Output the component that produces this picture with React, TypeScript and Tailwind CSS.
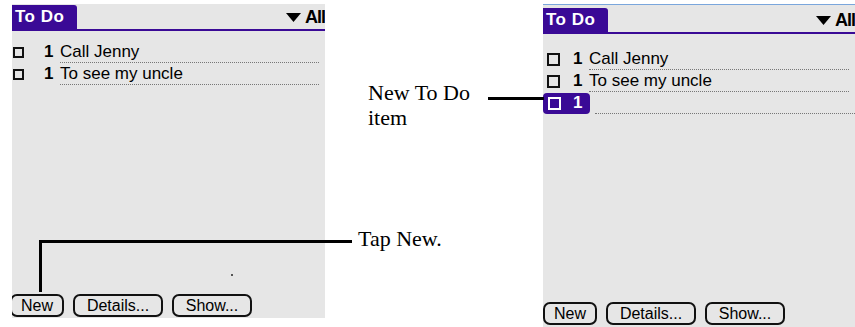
import React from 'react'

const purple = 'bg-[#3a0a96]'

function Header({ offset }: { offset: boolean }) {
  return (
    <div className={offset ? 'pt-[3px]' : 'pt-[1px]'}>
      <div className="flex h-[24px] items-stretch">
        <div className={`${purple} flex w-[65px] items-center rounded-tr-[3px] pl-[3px] text-[17px] font-bold tracking-[0.5px] text-white`}>
          To Do
        </div>
        <div className="flex flex-1 items-center justify-end gap-[4px]">
          <svg width="15" height="9" viewBox="0 0 15 9">
            <polygon points="0,0 15,0 7.5,9" fill="#000" />
          </svg>
          <span className="w-[20px] overflow-hidden whitespace-nowrap text-[18px] font-bold leading-none tracking-[-1px]">All</span>
        </div>
      </div>
      <div className={`${purple} h-[2px]`} />
    </div>
  )
}

function Row({ text, big }: { text: string; big: boolean }) {
  return (
    <div className="flex h-[22px] items-center">
      <div className={`${big ? 'ml-[4px] h-[13px] w-[13px]' : 'ml-[1px] h-[11px] w-[11px]'} border-2 border-[#111]`} />
      <span className={`${big ? 'ml-[13px]' : 'ml-[20px]'} w-[16px] text-[17px] font-bold`}>1</span>
      <div className="mr-[6px] flex h-full flex-1 items-center border-b border-dotted border-[#777] text-[17px]">
        {text}
      </div>
    </div>
  )
}

function Buttons() {
  return (
    <div className="flex h-[23px] gap-[9px] text-[16px]">
      {['New', 'Details...', 'Show...'].map((b, i) => (
        <div
          key={b}
          className={`flex items-center justify-center rounded-[7px] border-2 border-[#111] ${i === 0 ? 'w-[54px]' : i === 1 ? 'w-[90px]' : 'w-[80px]'}`}
        >
          {b}
        </div>
      ))}
    </div>
  )
}

export default function App() {
  return (
    <div className="relative flex h-[327px] w-[855px] overflow-hidden bg-white font-['Liberation_Sans',sans-serif] text-black">
      {/* left screen */}
      <div className="ml-[12px] mt-[4px] flex h-[314px] w-[313px] flex-col overflow-hidden bg-[#e6e6e6]">
        <Header offset={false} />
        <div className="mt-[10px]">
          <Row text="Call Jenny" big={false} />
          <Row text="To see my uncle" big={false} />
        </div>
        <div className="relative flex-1">
          <div className="absolute left-[219px] top-[189px] h-[2px] w-[2px] bg-[#555]" />
        </div>
        <div className="mb-[1px] -ml-[2px]">
          <Buttons />
        </div>
      </div>

      {/* callouts */}
      <div className="flex w-[218px] flex-col font-['Liberation_Serif',serif] text-[22px] leading-[25px]">
        <div className="ml-[43px] mt-[80px] w-[115px]">New To Do item</div>
        <div className="ml-[33px] mt-[96px]">Tap New.</div>
      </div>

      {/* right screen */}
      <div className="mt-[4px] flex h-[323px] w-[312px] flex-col overflow-hidden border-t border-t-[#7aa6dc] bg-[#e6e6e6]">
        <Header offset />
        <div className="mt-[14px]">
          <Row text="Call Jenny" big />
          <Row text="To see my uncle" big />
          <div className="flex h-[22px] items-center">
            <div className={`${purple} flex h-[21px] w-[47px] items-center rounded-[4px]`}>
              <div className="ml-[5px] h-[13px] w-[13px] border-2 border-white" />
              <span className="ml-[12px] text-[17px] font-bold text-white">1</span>
            </div>
            <div className="ml-[5px] h-full flex-1 border-b border-dotted border-[#777]" />
          </div>
        </div>
        <div className="flex-1" />
        <div className="mb-[2px]">
          <Buttons />
        </div>
      </div>

      {/* pointer lines */}
      <div className="absolute left-[39px] top-[240px] h-[3px] w-[313px] bg-black" />
      <div className="absolute left-[39px] top-[240px] h-[52px] w-[3px] bg-black" />
      <div className="absolute left-[488px] top-[97px] h-[3px] w-[56px] bg-black" />
    </div>
  )
}
